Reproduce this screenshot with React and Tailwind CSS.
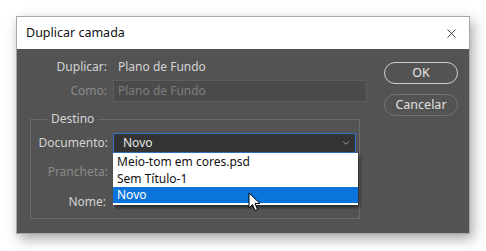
import React from "react";
import { ChevronDown, X } from "lucide-react";

const font = { fontFamily: '"Noto Sans", "Open Sans", sans-serif' };

function Cursor() {
  return (
    <svg
      className="absolute left-[135px] top-[5px]"
      width="13"
      height="21"
      viewBox="0 0 13 21"
    >
      <path
        d="M1 1 L1 16 L4.5 12.5 L7 18.5 L9.5 17.5 L7 11.5 L12 11.5 Z"
        fill="#fff"
        stroke="#000"
        strokeWidth="1"
        strokeLinejoin="round"
      />
    </svg>
  );
}

export default function App() {
  return (
    <div
      className="w-[486px] h-[251px] bg-white pt-4 pl-4 text-[12px] leading-none"
      style={font}
    >
      <div className="w-[454px] h-[218px] border border-[#a9a5a9] shadow-[3px_5px_12px_rgba(0,0,0,0.35)] flex flex-col">
        {/* title bar */}
        <div className="h-[32px] bg-white flex items-center justify-between pl-[9px] pr-[10px]">
          <span className="text-[12.5px] text-[#111]">Duplicar camada</span>
          <X size={15} strokeWidth={1.3} className="text-[#222]" />
        </div>

        {/* body */}
        <div className="flex-1 bg-[#535353] flex">
          <div className="w-[352px]">
            <div className="mt-[7px] h-[22px] flex items-center">
              <span className="w-[90px] text-right text-[#d4d4d4]">Duplicar:</span>
              <span className="ml-[11px] text-[#d4d4d4]">Plano de Fundo</span>
            </div>
            <div className="mt-[2px] h-[22px] flex items-center">
              <span className="w-[90px] text-right text-[#8b8b8b]">Como:</span>
              <div className="ml-[6px] w-[254px] h-[22px] bg-[#4b4b4b] border border-[#5d5d5d] flex items-center pl-[4px] text-[#7c7c7c]">
                Plano de Fundo
              </div>
            </div>

            <fieldset className="ml-[13px] mt-[9px] w-[330px] h-[108px] border border-[#6a6a6a]">
              <legend className="ml-[16px] px-[4px] text-[#d4d4d4] leading-[16px]">
                Destino
              </legend>

              <div className="mt-[6px] h-[20px] flex items-center">
                <span className="w-[77px] text-right text-[#d4d4d4]">Documento:</span>
                <div className="relative ml-[5px] w-[243px] h-[20px] bg-[#333333] border border-[#2f72c4] flex items-center justify-between pl-[9px] pr-[4px] text-[#e6e6e6]">
                  <span>Novo</span>
                  <ChevronDown size={10} strokeWidth={2} className="text-[#b5b5b5]" />

                  <div className="absolute left-[-1px] top-[19px] w-[245px] bg-white shadow-[2px_2px_3px_rgba(0,0,0,0.45)] pb-[2px] text-[#111] z-10">
                    <div className="h-[17px] flex items-center pl-[4px]">Meio-tom em cores.psd</div>
                    <div className="h-[17px] flex items-center pl-[4px]">Sem Título-1</div>
                    <div className="relative h-[16px] flex items-center pl-[4px] bg-[#0a74da] text-white">
                      Novo
                      <Cursor />
                    </div>
                  </div>
                </div>
              </div>

              <div className="mt-[9px] h-[20px] flex items-center">
                <span className="w-[77px] text-right text-[#8b8b8b]">Prancheta:</span>
                <div className="ml-[5px] w-[243px] h-[20px] bg-[#4b4b4b] border border-[#5d5d5d]" />
              </div>

              <div className="mt-[10px] h-[20px] flex items-center">
                <span className="w-[75px] text-right text-[#d4d4d4]">Nome:</span>
                <div className="ml-[7px] w-[243px] h-[14px] bg-[#4a4a4a] border-l border-[#6a6a6a]" />
              </div>
            </fieldset>
          </div>

          <div className="ml-auto pr-[11px] pt-[13px] flex flex-col gap-[10px]">
            <button className="w-[74px] h-[22px] rounded-full border-[1.5px] border-[#cfcfcf] text-[#e8e8e8] text-[12.5px] flex items-center justify-center">
              OK
            </button>
            <button className="w-[74px] h-[22px] rounded-full border-[1.5px] border-[#717171] text-[#e0e0e0] text-[12.5px] flex items-center justify-center">
              Cancelar
            </button>
          </div>
        </div>
      </div>
    </div>
  );
}
